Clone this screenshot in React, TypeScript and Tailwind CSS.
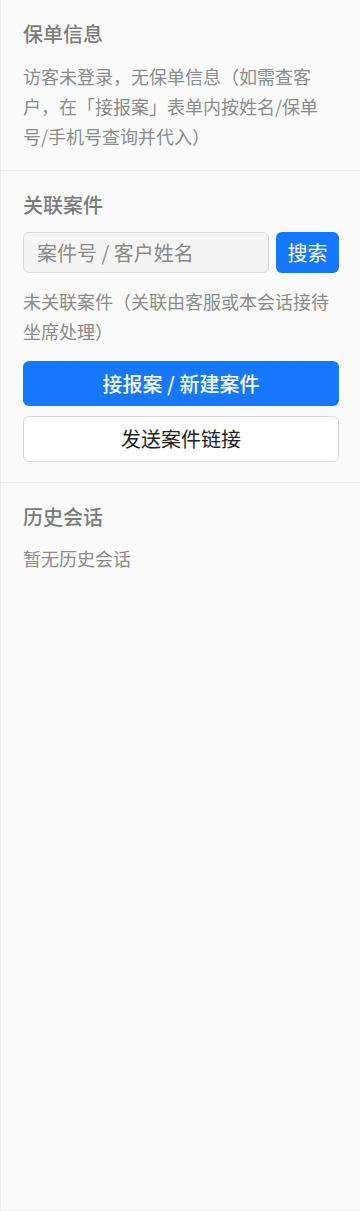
import React from "react";

export default function App() {
  const font = { fontFamily: '"Noto Sans CJK SC", "Noto Sans", sans-serif' };
  return (
    <div
      className="w-[360px] h-[1211px] bg-[#fafafa] border-l border-b border-[#ececec] flex flex-col"
      style={font}
    >
      <section className="pl-[22px] pr-[21px] pt-5 pb-[19px] border-b border-[#ededed]">
        <h2 className="text-[20px] leading-7 font-medium text-[#7c7c7c]">保单信息</h2>
        <p className="mt-[13px] text-[18px] leading-[30px] text-[#8c8c8c]">
          访客未登录，无保单信息（如需查客户，在「接报案」表单内按姓名/保单号/手机号查询并代入）
        </p>
      </section>

      <section className="pl-[22px] pr-[21px] pt-5 pb-5 border-b border-[#ededed]">
        <h2 className="text-[20px] leading-7 font-medium text-[#7c7c7c]">关联案件</h2>
        <div className="mt-[13px] flex gap-[7px]">
          <input
            className="flex-1 min-w-0 h-[41px] rounded-[6px] border border-[#dcdcdc] bg-[#f5f5f5] px-[13px] text-[20px] text-[#333] placeholder:text-[#8a8a8a] outline-none"
            placeholder="案件号 / 客户姓名"
            style={font}
          />
          <button
            className="w-[63px] h-[41px] rounded-[6px] bg-[#1677ff] text-white text-[20px]"
            style={font}
          >
            搜索
          </button>
        </div>
        <p className="mt-[13px] text-[18px] leading-[30px] text-[#8c8c8c]">
          未关联案件（关联由客服或本会话接待坐席处理）
        </p>
        <button
          className="mt-[15px] w-full h-[45px] rounded-[6px] bg-[#1677ff] text-white text-[20px] font-medium"
          style={font}
        >
          接报案 / 新建案件
        </button>
        <button
          className="mt-[10px] w-full h-[46px] rounded-[6px] bg-white border border-[#d9d9d9] text-[#222] text-[20px]"
          style={font}
        >
          发送案件链接
        </button>
      </section>

      <section className="pl-[22px] pr-[21px] pt-5 pb-5">
        <h2 className="text-[20px] leading-7 font-medium text-[#7c7c7c]">历史会话</h2>
        <p className="mt-3 text-[18px] leading-[30px] text-[#8c8c8c]">暂无历史会话</p>
      </section>
    </div>
  );
}
